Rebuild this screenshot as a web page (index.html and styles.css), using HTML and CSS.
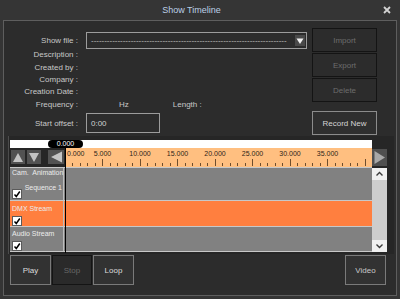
FILE: index.html
```html
<!DOCTYPE html>
<html>
<head>
<meta charset="utf-8">
<title>Show Timeline</title>
<link rel="stylesheet" href="styles.css">
</head>
<body>
<div class="window">
  <div class="titlebar">
    <span class="title">Show Timeline</span>
    <svg class="close" width="8" height="8" viewBox="0 0 8 8"><path d="M1 1L7 7M7 1L1 7" stroke="#d2d2d2" stroke-width="1.8" fill="none"/></svg>
  </div>
  <div class="panel">
    <div class="top">
      <div class="form">
        <span class="lbl">Show file :</span>
        <div class="combo">
          <span class="combo-text">--------------------------------------------------------------------------</span>
          <span class="combo-arrow"><svg width="10" height="10" viewBox="0 0 10 10"><path d="M1.5 2.5H8.5L5 8Z" fill="#f0f0f0"/></svg></span>
        </div>
        <span class="lbl">Description :</span><span></span>
        <span class="lbl">Created by :</span><span></span>
        <span class="lbl">Company :</span><span></span>
        <span class="lbl">Creation Date :</span><span></span>
        <span class="lbl">Frequency :</span>
        <div class="freq"><span class="hz">Hz</span><span class="length">Length :</span></div>
        <span class="lbl lbl-offset">Start offset :</span>
        <div class="input">0:00</div>
      </div>
      <div class="side">
        <div class="btn disabled">Import</div>
        <div class="btn disabled">Export</div>
        <div class="btn disabled">Delete</div>
        <div class="btn record">Record New</div>
      </div>
    </div>

    <div class="timeline">
      <div class="headbar"><span class="pill">0.000</span></div>
      <div class="ruler-row">
        <div class="tl-ctrls">
          <span class="tbtn tbtn-up"><svg width="14" height="14" viewBox="0 0 14 14"><path d="M2 12H12L7 3Z" fill="#c4c4c4"/></svg></span>
          <span class="tbtn tbtn-down"><svg width="14" height="14" viewBox="0 0 14 14"><path d="M2 3H12L7 12Z" fill="#c4c4c4"/></svg></span>
          <span class="tbtn tbtn-left"><svg width="16" height="14" viewBox="0 0 16 14"><path d="M14 1.5V12.5L3 7Z" fill="#c4c4c4"/></svg></span>
        </div>
        <svg class="ruler" width="307" height="19" viewBox="0 0 307 19" shape-rendering="crispEdges">
          <rect x="0" y="0" width="307" height="19" fill="#ffbf80"/>
          <path d="M7.5 18V15M15.5 18V15M22.5 18V15M30.5 18V15M45.5 18V15M52.5 18V15M60.5 18V15M67.5 18V15M82.5 18V15M90.5 18V15M97.5 18V15M105.5 18V15M120.5 18V15M127.5 18V15M135.5 18V15M142.5 18V15M157.5 18V15M165.5 18V15M172.5 18V15M180.5 18V15M195.5 18V15M202.5 18V15M210.5 18V15M217.5 18V15M232.5 18V15M240.5 18V15M247.5 18V15M255.5 18V15M270.5 18V15M277.5 18V15M285.5 18V15M292.5 18V15" stroke="#6e4e2e" stroke-width="1"/>
          <path d="M37.5 18V11M75.5 18V11M112.5 18V11M150.5 18V11M187.5 18V11M225.5 18V11M262.5 18V11M300.5 18V11" stroke="#6e4e2e" stroke-width="1"/>
          <g class="ruler-text" shape-rendering="auto">
            <text x="2" y="8">0.000</text>
            <text x="37.5" y="8" text-anchor="middle">5.000</text>
            <text x="75" y="8" text-anchor="middle">10.000</text>
            <text x="112.5" y="8" text-anchor="middle">15.000</text>
            <text x="150" y="8" text-anchor="middle">20.000</text>
            <text x="187.5" y="8" text-anchor="middle">25.000</text>
            <text x="225" y="8" text-anchor="middle">30.000</text>
            <text x="262.5" y="8" text-anchor="middle">35.000</text>
          </g>
        </svg>
        <span class="rbtn"><svg width="15" height="17" viewBox="0 0 15 17"><path d="M2.5 2V15L13 8.5Z" fill="#a8a8a8"/></svg></span>
      </div>
      <div class="tracks">
        <div class="track-list">
          <div class="track track-cam">
            <div class="thead">
              <span class="tname">Cam. Animation</span>
              <span class="tsub">Sequence 1</span>
              <span class="check"><svg width="8" height="8" viewBox="0 0 8 8"><path d="M1.5 4.5L3.3 6.5L6.8 1.5" stroke="#000" stroke-width="1.5" fill="none"/></svg></span>
            </div>
            <div class="tbody"></div>
          </div>
          <div class="track track-dmx">
            <div class="thead">
              <span class="tname">DMX Stream</span>
              <span class="check"><svg width="8" height="8" viewBox="0 0 8 8"><path d="M1.5 4.5L3.3 6.5L6.8 1.5" stroke="#000" stroke-width="1.5" fill="none"/></svg></span>
            </div>
            <div class="tbody"></div>
          </div>
          <div class="track track-audio">
            <div class="thead">
              <span class="tname">Audio Stream</span>
              <span class="check"><svg width="8" height="8" viewBox="0 0 8 8"><path d="M1.5 4.5L3.3 6.5L6.8 1.5" stroke="#000" stroke-width="1.5" fill="none"/></svg></span>
            </div>
            <div class="tbody"></div>
          </div>
        </div>
        <div class="scrollbar">
          <span class="sb-btn"><svg width="15" height="12" viewBox="0 0 15 12"><path d="M4.5 7.5L7.5 4.5L10.5 7.5" stroke="#3a3a3a" stroke-width="1.4" fill="none"/></svg></span>
          <span class="sb-btn"><svg width="15" height="12" viewBox="0 0 15 12"><path d="M4.5 4.5L7.5 7.5L10.5 4.5" stroke="#3a3a3a" stroke-width="1.4" fill="none"/></svg></span>
        </div>
      </div>
      <div class="playhead"></div>
    </div>

    <div class="controls">
      <div class="cbtn cbtn-wide">Play</div>
      <div class="cbtn cbtn-disabled">Stop</div>
      <div class="cbtn cbtn-wide">Loop</div>
      <div class="cbtn cbtn-wide cbtn-video">Video</div>
    </div>
  </div>
</div>
</body>
</html>
```

FILE: styles.css
```css
* { box-sizing: border-box; margin: 0; padding: 0; }
html, body { width: 400px; height: 299px; overflow: hidden; }
body {
  background: #353535;
  font-family: "Liberation Sans", Arial, sans-serif;
  font-size: 8px;
  color: #c8c8c8;
}
.window {
  width: 400px;
  height: 299px;
  background: #353535;
  display: flex;
  flex-direction: column;
}
.titlebar {
  height: 20px;
  display: flex;
  align-items: center;
  padding-right: 9px;
}
.title {
  flex: 1;
  text-align: center;
  font-size: 9px;
  line-height: 10px;
  color: #bccfe6;
}
.close { display: block; }

.panel {
  margin: 0 3px;
  height: 276px;
  border: 1px solid #5e5e5e;
  background: #2c2c2c;
  display: flex;
  flex-direction: column;
}
.top {
  display: flex;
  height: 115px;
  gap: 5px;
}
.form {
  display: grid;
  grid-template-columns: 74px 221px;
  grid-template-rows: 17px 12px 13px 12px 12px 13px 22px;
  column-gap: 8px;
  padding-top: 11px;
  align-content: start;
}
.lbl {
  text-align: right;
  align-self: center;
  line-height: 10px;
  white-space: nowrap;
}
.lbl-offset { align-self: end; margin-bottom: 4px; }
.combo {
  display: flex;
  align-items: center;
  border: 1px solid #9c9c9c;
  background: #2c2c2c;
  padding: 0 1px 0 4px;
  height: 17px;
}
.combo-text {
  flex: 1;
  min-width: 0;
  white-space: nowrap;
  color: #c0c0c0;
  line-height: 10px;
  letter-spacing: -0.02px;
}
.combo-arrow {
  width: 10px;
  height: 11px;
  background: #4a4a4a;
  display: flex;
  align-items: center;
  justify-content: center;
}
.freq {
  display: flex;
  align-items: center;
  line-height: 10px;
}
.hz { margin-left: 33px; }
.length { margin-left: 44px; }
.input {
  align-self: end;
  width: 74px;
  height: 20px;
  border: 1px solid #9c9c9c;
  padding-left: 4px;
  display: flex;
  align-items: center;
  color: #d0d0d0;
}

.side {
  display: flex;
  flex-direction: column;
  width: 65px;
  padding-top: 7px;
}
.btn {
  height: 24px;
  width: 65px;
  border: 1px solid #141414;
  background: #2c2c2c;
  display: flex;
  align-items: center;
  justify-content: center;
  color: #6c6c6c;
}
.btn + .btn { margin-top: 1px; }
.side .record {
  margin-top: 9px;
  border-color: #8c8c8c;
  color: #d4d4d4;
  background: #2f2f2f;
}

.timeline {
  position: relative;
  margin-left: 4px;
  width: 386px;
  height: 118px;
  border-left: 1px solid #4c4c4c;
  background: #262626;
  padding: 4px 7px 2px 1px;
  display: flex;
  flex-direction: column;
}
.headbar {
  position: relative;
  width: 362px;
  height: 8px;
  background: #ffffff;
}
.pill {
  position: absolute;
  left: 38px;
  top: 0;
  width: 35px;
  height: 8px;
  border-radius: 4px;
  background: #000;
  color: #fff;
  font-size: 7px;
  line-height: 8px;
  text-align: center;
  z-index: 2;
}
.ruler-row {
  display: flex;
  height: 19px;
}
.tl-ctrls {
  width: 55px;
  display: flex;
  align-items: flex-start;
  padding: 2px 0 0 1px;
}
.tbtn {
  height: 14px;
  background: #525252;
  display: flex;
  align-items: center;
  justify-content: center;
}
.tbtn-up { width: 14px; }
.tbtn-down { width: 14px; margin-left: 2px; }
.tbtn-left { width: 16px; margin-left: 7px; }
.ruler { display: block; }
.ruler-text text {
  font-family: "Liberation Sans", Arial, sans-serif;
  font-size: 7px;
  fill: #2e2418;
}
.rbtn {
  width: 15px;
  height: 17px;
  margin-top: 1px;
  background: #4f4f4f;
  display: flex;
}

.tracks {
  display: flex;
  height: 85px;
}
.track-list {
  width: 362px;
  border-top: 1px solid #c8c8c8;
}
.track {
  display: flex;
  border-bottom: 1px solid #c8c8c8;
  background: #818181;
  color: #ececec;
  font-size: 7px;
}
.track-cam { height: 33px; }
.track-dmx { height: 26px; background: #ff7f3f; }
.track-audio { height: 25px; }
.thead {
  width: 54px;
  border-right: 1px solid #bdbdbd;
  display: flex;
  flex-direction: column;
  padding-left: 2px;
}
.tbody { flex: 1; }
.tname { line-height: 8px; white-space: nowrap; }
.tsub { line-height: 8px; text-align: right; padding-right: 1px; white-space: nowrap; }
.track-cam .tname { margin-top: 1px; word-spacing: 2px; }
.track-cam .tsub { margin-top: 7px; }
.track-cam .check { margin-top: -3px; }
.track-dmx .tname { margin-top: 4px; }
.track-dmx .check { margin-top: 3px; }
.track-audio .tname { margin-top: 3px; }
.track-audio .check { margin-top: 3px; }
.check {
  width: 10px;
  height: 10px;
  background: #fff;
  border: 1px solid #5a5a5a;
  display: flex;
  align-items: center;
  justify-content: center;
}
.scrollbar {
  width: 15px;
  height: 84px;
  margin-top: 1px;
  background: #cdcdcd;
  display: flex;
  flex-direction: column;
  justify-content: space-between;
}
.sb-btn {
  height: 12px;
  background: #f0f0f0;
  display: flex;
}
.playhead {
  position: absolute;
  left: 56px;
  top: 4px;
  width: 1px;
  height: 113px;
  background: #000;
  z-index: 1;
}

.controls {
  display: flex;
  gap: 1px;
  padding: 1px 10px 0 6px;
}
.cbtn {
  height: 30px;
  width: 41px;
  border: 1px solid #7a7a7a;
  background: #323232;
  color: #dcdcdc;
  display: flex;
  align-items: center;
  justify-content: center;
}
.cbtn-disabled {
  width: 40px;
  border-color: #141414;
  background: #2a2a2a;
  color: #686868;
}
.cbtn-video { margin-left: auto; color: #c8c8c8; }
```
